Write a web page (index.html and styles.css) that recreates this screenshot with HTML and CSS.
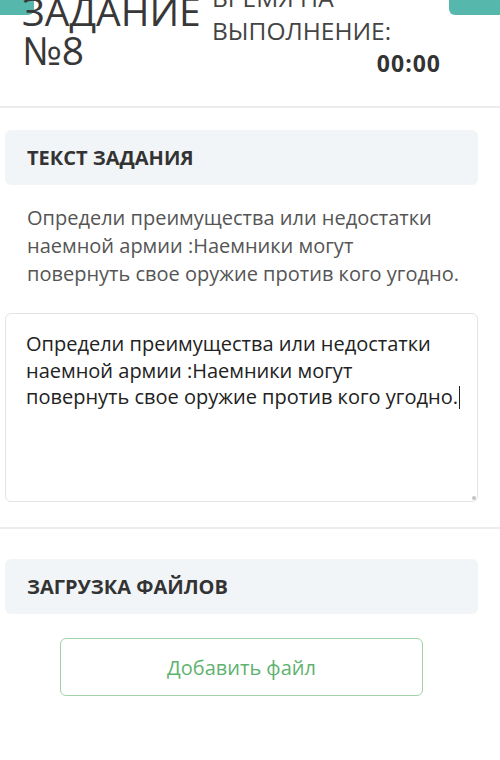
FILE: index.html
```html
<!DOCTYPE html>
<html lang="ru">
<head>
<meta charset="utf-8">
<title>Задание №8</title>
<link rel="stylesheet" href="styles.css">
</head>
<body>
<div class="page">
  <div class="tab tab-left"></div>
  <div class="tab tab-right"></div>
  <header class="header">
    <h1 class="title">ЗАДАНИЕ<br>№8</h1>
    <div class="timer">
      <div class="timer-label">ВРЕМЯ НА<br>ВЫПОЛНЕНИЕ:</div>
      <div class="timer-value">00:00</div>
    </div>
  </header>
  <section class="section">
    <div class="section-head">ТЕКСТ ЗАДАНИЯ</div>
    <p class="task-text">Определи преимущества или недостатки<br>наемной армии :Наемники могут<br>повернуть свое оружие против кого угодно.</p>
    <div class="answer">Определи преимущества или недостатки<br>наемной армии :Наемники могут<br>повернуть свое оружие против кого угодно.<span class="caret"></span></div>
  </section>
  <section class="section section-files">
    <div class="section-head">ЗАГРУЗКА ФАЙЛОВ</div>
    <button class="add-file" type="button">Добавить файл</button>
  </section>
</div>
</body>
</html>
```

FILE: styles.css
```css
html, body {
  margin: 0;
  padding: 0;
  background: #ffffff;
}
body {
  font-family: "Open Sans", "DejaVu Sans", sans-serif;
  color: #333333;
  overflow: hidden;
}
.page {
  position: relative;
  width: 500px;
  height: 760px;
  overflow: hidden;
}
.tab {
  position: absolute;
  top: 0;
  height: 15px;
  background: #56b8ad;
  z-index: 0;
}
.tab-left {
  left: 0;
  width: 34px;
  border-bottom-right-radius: 6px;
}
.tab-right {
  right: 0;
  width: 51px;
  border-bottom-left-radius: 6px;
}
.header {
  position: relative;
  z-index: 1;
  display: flex;
  height: 106px;
  padding-left: 22px;
  border-bottom: 2px solid #ececec;
}
.title {
  margin: -9px 0 0 0;
  width: 190px;
  flex: none;
  font-size: 39px;
  line-height: 39px;
  font-weight: 400;
  color: #383838;
  white-space: nowrap;
}
.timer {
  width: 229px;
  flex: none;
  margin-top: -19px;
}
.timer-label {
  font-size: 24.5px;
  line-height: 33px;
  color: #444444;
  white-space: nowrap;
}
.timer-value {
  font-size: 23px;
  line-height: 32px;
  font-weight: 700;
  letter-spacing: 1px;
  text-align: right;
  color: #333333;
}
.section {
  padding-top: 22px;
}
.section-head {
  margin: 0 22px 0 5px;
  height: 55px;
  line-height: 55px;
  padding-left: 22px;
  background: #f2f5f7;
  border-radius: 6px;
  font-size: 20px;
  font-weight: 700;
  color: #333333;
}
.task-text {
  margin: 19px 0 0 27px;
  font-size: 20px;
  line-height: 28px;
  color: #555555;
  white-space: nowrap;
}
.answer {
  position: relative;
  margin: 25px 22px 0 5px;
  height: 189px;
  box-sizing: border-box;
  padding: 17px 20px 0 20px;
  border: 1px solid #e3e3e3;
  border-radius: 6px;
  font-size: 20px;
  line-height: 26.5px;
  color: #222222;
  white-space: nowrap;
}
.answer::after {
  content: "";
  position: absolute;
  right: 1px;
  bottom: 1px;
  width: 4px;
  height: 4px;
  border-radius: 2px;
  background: #c4c4c4;
}
.caret {
  display: inline-block;
  width: 1px;
  height: 23px;
  margin-left: 1px;
  vertical-align: -5px;
  background: #222222;
}
.section-files {
  margin-top: 25px;
  border-top: 2px solid #ececec;
  padding-top: 30px;
}
.add-file {
  display: block;
  margin: 24px 0 0 60px;
  width: 363px;
  height: 58px;
  background: #ffffff;
  border: 1px solid #9fd2a8;
  border-radius: 6px;
  font-family: "Open Sans", "DejaVu Sans", sans-serif;
  font-size: 20px;
  color: #5fb26f;
  cursor: pointer;
}
```
